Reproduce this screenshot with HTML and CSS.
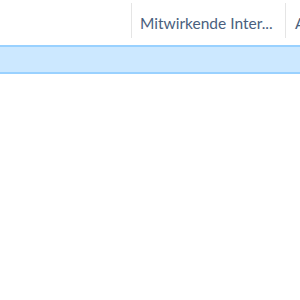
FILE: index.html
```html
<!DOCTYPE html>
<html lang="de">
<head>
<meta charset="utf-8">
<link rel="stylesheet" href="styles.css">
</head>
<body>
<div class="view">
  <div class="header">
    <div class="col col-name"></div>
    <div class="col col-contrib"><span class="label">Mitwirkende Inter...</span></div>
    <div class="col col-next"><span class="label">A</span></div>
  </div>
  <div class="row selected"></div>
</div>
</body>
</html>
```
FILE: styles.css
```css
html, body {
  margin: 0;
  padding: 0;
  background: #ffffff;
  width: 300px;
  height: 300px;
  overflow: hidden;
}
.view {
  font-family: Lato, "Open Sans", sans-serif;
  font-size: 15.5px;
  color: #4a5f7e;
}
.header {
  display: flex;
  height: 45px;
  padding-top: 3px;
  box-sizing: border-box;
  align-items: flex-start;
}
.col {
  height: 35px;
  display: flex;
  align-items: center;
  box-sizing: border-box;
  flex: none;
  white-space: nowrap;
  overflow: hidden;
}
.col-name {
  width: 132px;
  border-right: 1px solid #e5e5e5;
}
.col-contrib {
  width: 154px;
  padding-left: 8px;
  border-right: 1px solid #e5e5e5;
}
.col-next {
  width: 14px;
  padding-left: 9px;
}
.label {
  padding-top: 4px;
}
.row {
  height: 29px;
  box-sizing: border-box;
}
.selected {
  background: #cce8ff;
  border-top: 2px solid #99d1ff;
  border-bottom: 2px solid #99d1ff;
}
```
